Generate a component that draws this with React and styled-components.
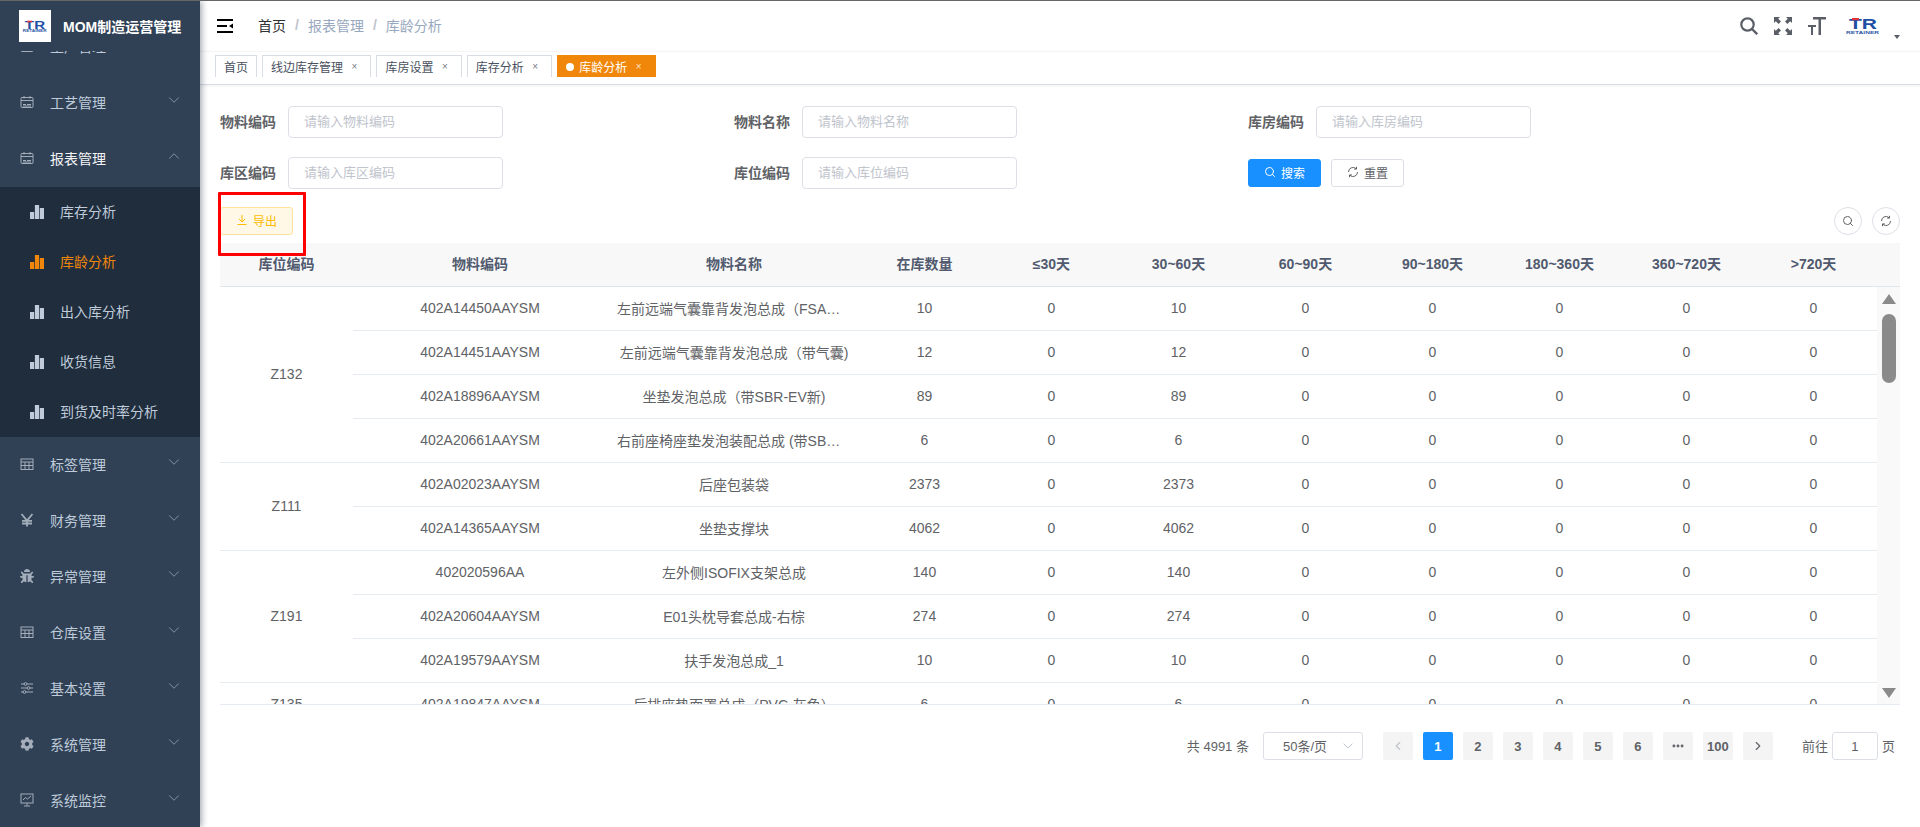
import React from 'react';
import styled, { createGlobalStyle } from 'styled-components';
import { FaBug, FaCog } from 'react-icons/fa';
import { ChevronDown, ChevronUp, ChevronLeft, ChevronRight, Search, MoreHorizontal } from 'lucide-react';

const Global = createGlobalStyle`
  html, body { margin: 0; padding: 0; height: 100%; overflow: hidden; background: #fff; }
  #root { height: 100%; }
  * { box-sizing: border-box; }
  body { font-family: "Liberation Sans", "Noto Sans CJK SC", sans-serif; font-size: 14px; color: #606266; }
`;

const Shell = styled.div`
  display: flex;
  height: 827px;
  border-top: 1px solid #666;
  overflow: hidden;
`;

const Side = styled.aside`
  position: relative;
  z-index: 3;
  flex: 0 0 200px;
  display: flex;
  flex-direction: column;
  background: #304156;
  box-shadow: 2px 0 6px rgba(0, 21, 41, 0.35);
`;
const Brand = styled.div`
  position: relative;
  z-index: 1;
  flex: 0 0 50px;
  display: flex;
  align-items: center;
  gap: 12px;
  padding: 0 0 0 19px;
  background: #304156;
  color: #fff;
  font-weight: 700;
  font-size: 14px;
`;
const BrandMark = styled.div`
  width: 32px;
  height: 32px;
  background: #fff;
  display: flex;
  align-items: center;
  justify-content: center;
`;
const MenuClip = styled.nav`
  flex: 1;
  overflow: hidden;
`;
const MenuList = styled.div`
  margin-top: -32px;
`;
const MenuItem = styled.div`
  height: 56px;
  display: flex;
  align-items: center;
  padding: 0 20px;
  color: ${p => (p.$open ? '#f4f4f5' : '#bfcbd9')};
`;
const MenuIcon = styled.span`
  flex: 0 0 30px;
  display: flex;
  align-items: center;
  margin-top: -2px;
  color: #a3aeba;
`;
const MenuLabel = styled.span`
  flex: 1;
  padding-bottom: 2px;
`;
const MenuArrow = styled.span`
  display: flex;
  margin-right: -3px;
  margin-top: -6px;
  color: #8493a5;
`;
const SubList = styled.div`
  background: #1f2d3d;
`;
const SubItem = styled.div`
  height: 50px;
  display: flex;
  align-items: center;
  padding-left: 30px;
  gap: 16px;
  color: ${p => (p.$active ? '#f1870a' : '#bfcbd9')};
`;
const SubText = styled.span`
  padding-bottom: 2px;
`;

const Main = styled.main`
  flex: 1;
  min-width: 0;
  display: flex;
  flex-direction: column;
`;
const Navbar = styled.header`
  flex: 0 0 50px;
  display: flex;
  align-items: center;
  padding: 0 20px 0 17px;
`;
const Crumbs = styled.div`
  display: flex;
  align-items: center;
  margin-left: 25px;
  padding-bottom: 2px;
  flex: 1;
  color: #97a8be;
`;
const CrumbSep = styled.span`
  margin: 0 9px;
  color: #c0c4cc;
  font-weight: 700;
`;
const CrumbHome = styled.span`
  color: #303133;
`;
const Tools = styled.div`
  display: flex;
  align-items: center;
  gap: 16px;
  color: #5a5e66;
`;
const Avatar = styled.div`
  display: flex;
  align-items: flex-end;
  gap: 13px;
  margin-left: 3px;
`;
const Caret = styled.span`
  width: 0;
  height: 0;
  border-left: 3.5px solid transparent;
  border-right: 3.5px solid transparent;
  border-top: 4px solid #5a5e66;
  margin-bottom: -4px;
`;
const TagsBar = styled.div`
  flex: 0 0 34px;
  display: flex;
  gap: 5px;
  align-items: flex-start;
  padding: 3px 0 0 15px;
  border-top: 1px solid #f5f5f5;
  border-bottom: 1px solid #d8dce5;
  box-shadow: 0 1px 3px rgba(0, 0, 0, 0.06);
`;
const Tag = styled.div`
  height: 22px;
  display: flex;
  align-items: center;
  padding: 0 8px;
  font-size: 12px;
  color: ${p => (p.$active ? '#fff' : '#495060')};
  background: ${p => (p.$active ? '#f1870a' : '#fff')};
  border: 1px solid ${p => (p.$active ? '#f1870a' : '#d8dce5')};
  border-bottom: none;
`;
const TagDot = styled.span`
  width: 8px;
  height: 8px;
  border-radius: 50%;
  background: #fff;
  margin-right: 5px;
`;
const TagClose = styled.span`
  width: 16px;
  margin-left: 3.4px;
  text-align: center;
  font-size: 10px;
  opacity: 0.75;
`;

const Content = styled.section`
  flex: 1;
  padding: 21px 20px 0;
  position: relative;
  min-height: 0;
`;
const Filters = styled.form`
  display: grid;
  grid-template-columns: repeat(3, 514px);
  row-gap: 19px;
`;
const Field = styled.label`
  display: flex;
  align-items: center;
  height: 32px;
`;
const FieldLabel = styled.span`
  flex: 0 0 68px;
  font-weight: 700;
  padding-bottom: 2px;
`;
const Input = styled.input`
  width: 215px;
  height: 32px;
  padding: 0 15px 2px;
  border: 1px solid #dcdfe6;
  border-radius: 4px;
  font: inherit;
  font-size: 13px;
  outline: none;
  &::placeholder { color: #c0c4cc; opacity: 1; }
`;
const Actions = styled.div`
  display: flex;
  align-items: center;
  gap: 10px;
`;
const Button = styled.button`
  width: 73px;
  height: 28px;
  display: inline-flex;
  align-items: center;
  justify-content: center;
  gap: 5px;
  padding: 0 0 2px;
  font: inherit;
  font-size: 12px;
  border-radius: 3px;
  border: 1px solid ${p => (p.$kind === 'primary' ? '#1890ff' : p.$kind === 'warn' ? '#ffe399' : '#dcdfe6')};
  background: ${p => (p.$kind === 'primary' ? '#1890ff' : p.$kind === 'warn' ? '#fff8e6' : '#fff')};
  color: ${p => (p.$kind === 'primary' ? '#fff' : p.$kind === 'warn' ? '#ffba00' : '#606266')};
`;
const Toolbar = styled.div`
  position: relative;
  display: flex;
  justify-content: space-between;
  align-items: center;
  margin-top: 18px;
  height: 28px;
`;
const RoundGroup = styled.div`
  display: flex;
  gap: 10px;
`;
const RoundButton = styled.button`
  width: 28px;
  height: 28px;
  border-radius: 50%;
  border: 1px solid #dcdfe6;
  background: #fff;
  padding: 0;
  display: flex;
  align-items: center;
  justify-content: center;
  color: #606266;
`;
const RedMark = styled.div`
  position: absolute;
  left: -2px;
  top: -15px;
  width: 88px;
  height: 64px;
  border: 3px solid #f00;
  border-radius: 1px;
  pointer-events: none;
`;

const TableWrap = styled.div`
  margin-top: 8px;
  border-bottom: 1px solid #e6ebf5;
  height: 462px;
  display: grid;
  grid-template-columns: 1657px 23px;
  grid-template-rows: 44px 417px;
`;
const Table = styled.table`
  width: 1657px;
  table-layout: fixed;
  border-collapse: separate;
  border-spacing: 0;
`;
const HeadTable = styled(Table)`
  width: 1680px;
`;
const HeadBox = styled.div`
  grid-column: 1 / 3;
  background: #f8f8f9;
  border-bottom: 1px solid #dfe6ec;
`;
const Th = styled.th`
  height: 43px;
  font-weight: 700;
  font-size: 14px;
  color: #515a6e;
  text-align: center;
  padding: 0 10px 3px;
`;
const BodyBox = styled.div`
  overflow: hidden;
`;
const Td = styled.td`
  height: 44px;
  padding: 0 10px 2px;
  text-align: center;
  color: #606266;
  border-bottom: 1px solid #e6ebf2;
  white-space: nowrap;
  overflow: hidden;
  text-overflow: ellipsis;
`;
const ScrollTrack = styled.div`
  background: #f9f9f9;
  display: flex;
  flex-direction: column;
  align-items: center;
  padding-top: 7px;
  position: relative;
`;
const ScrollThumb = styled.div`
  width: 14px;
  height: 69px;
  margin-top: 10px;
  border-radius: 7px;
  background: #8a8a8a;
`;
const ScrollArrow = styled.div`
  width: 0;
  height: 0;
  border-left: 7.5px solid transparent;
  border-right: 7.5px solid transparent;
  ${p => (p.$down
    ? 'border-top: 10px solid #8a8a8a; position: absolute; bottom: 6px;'
    : 'border-bottom: 10px solid #8a8a8a;')}
`;

const Pager = styled.div`
  display: flex;
  align-items: center;
  justify-content: flex-end;
  margin-top: 27px;
  padding-right: 5px;
  height: 28px;
  font-size: 13px;
`;
const Total = styled.span`
  margin-right: 14px;
  padding-bottom: 2px;
`;
const PageSelect = styled.div`
  width: 100px;
  height: 28px;
  display: flex;
  align-items: center;
  justify-content: space-between;
  padding: 0 6px 0 19px;
  margin-right: 20px;
  border: 1px solid #dcdfe6;
  border-radius: 3px;
  color: #c0c4cc;
`;
const PageSelectText = styled.span`
  color: #606266;
  padding-bottom: 2px;
`;
const PageButtons = styled.div`
  display: flex;
  gap: 10px;
`;
const PageBtn = styled.div`
  width: 30px;
  height: 28px;
  display: flex;
  align-items: center;
  justify-content: center;
  border-radius: 2px;
  font-weight: 700;
  font-size: 13px;
  background: ${p => (p.$on ? '#1890ff' : '#f4f4f5')};
  color: ${p => (p.$on ? '#fff' : p.$off ? '#c0c4cc' : '#606266')};
`;
const Jump = styled.div`
  display: flex;
  align-items: center;
  margin-left: 29px;
  gap: 4px;
  padding-bottom: 0;
`;
const JumpText = styled.span`
  padding-bottom: 2px;
`;
const JumpInput = styled.div`
  width: 46px;
  height: 28px;
  display: flex;
  align-items: center;
  justify-content: center;
  border: 1px solid #dcdfe6;
  border-radius: 3px;
`;

const Svg = ({ s = 14, vb = '0 0 14 14', children, ...r }) => (
  <svg width={s} height={s} viewBox={vb} fill="none" stroke="currentColor" strokeWidth="1" {...r}>{children}</svg>
);
const CalIcon = () => (
  <Svg>
    <rect x="1" y="2.5" width="12" height="10" rx="1" />
    <path d="M1 5.5h12M4 1v2.5M10 1v2.5M3 9.5h3M7 9.5h4M3 11h8" />
  </Svg>
);
const TableIcon = () => (
  <Svg>
    <rect x="1" y="2" width="12" height="10.5" />
    <path d="M1 5h12M1 8.5h12M5 5v7.5M9 5v7.5" />
  </Svg>
);
const YenIcon = () => (
  <Svg strokeWidth="1.8"><path d="M1.5 1l5.5 6.5L12.500 1M7 7v6.500M2 7.800h10M2 10.500h10" /></Svg>
);
const SliderIcon = () => (
  <Svg>
    <path d="M1 3h3M7 3h6M1 7h6M10 7h3M1 11h2M6 11h7" />
    <circle cx="5.500" cy="3" r="1.400" /><circle cx="8.500" cy="7" r="1.400" /><circle cx="4.500" cy="11" r="1.400" />
  </Svg>
);
const MonitorIcon = () => (
  <Svg>
    <rect x="1" y="1" width="12" height="9" />
    <path d="M3 7l2.500-2.500 2 1.500L11 3M7 10v2.500M4 13h6" />
  </Svg>
);
const BarsIcon = () => (
  <svg width="14" height="14" viewBox="0 0 14 14" fill="currentColor">
    <rect x="0" y="7" width="4.200" height="7" /><rect x="4.900" y="0" width="4.200" height="14" /><rect x="9.800" y="3" width="4.200" height="11" />
  </svg>
);
const Hamburger = () => (
  <svg width="16" height="14" viewBox="0 0 16 14" fill="#000">
    <rect x="0" y="0" width="16" height="2" /><rect x="0" y="6" width="10" height="2" /><rect x="0" y="12" width="16" height="2" />
    <path d="M16 4.500v5l-4-2.500z" />
  </svg>
);
const TopSearch = () => (
  <svg width="18" height="18" viewBox="0 0 18 18" fill="none" stroke="currentColor">
    <circle cx="7.500" cy="7.500" r="6.200" strokeWidth="2.200" />
    <path d="M12 12l5.200 5.200" strokeWidth="2.400" />
  </svg>
);
const FullIcon = () => (
  <svg width="18" height="18" viewBox="0 0 18 18" fill="currentColor">
    <path d="M0 0h6L4.200 1.800 7 4.600 4.600 7 1.800 4.200 0 6zM18 0v6l-1.800-1.800L13.400 7 11 4.600l2.800-2.800L12 0zM0 18v-6l1.800 1.800L4.600 11 7 13.400l-2.800 2.800L6 18zM18 18h-6l1.800-1.800L11 13.400l2.400-2.400 2.800 2.800L18 12z" />
  </svg>
);
const SizeIcon = () => (
  <svg width="18" height="18" viewBox="0 0 18 18" fill="currentColor">
    <path d="M5 0h13v2.500h-5V18h-2.500V2.500H5zM0 8h8v2H5v8H3v-8H0z" />
  </svg>
);
const Refresh = ({ s = 12 }) => (
  <Svg s={s} vb="0 0 12 12">
    <path d="M10.500 6A4.500 4.500 0 0 1 3 9.400M1.500 6A4.500 4.500 0 0 1 9 2.600" />
    <path d="M9.500 0.800v2.300H7.200M2.500 11.200V8.900h2.300" />
  </Svg>
);
const Download = () => (
  <Svg s={12} vb="0 0 12 12"><path d="M6 1v6.500M3 5l3 3 3-3M1.500 10.500h9" /></Svg>
);
const Logo = ({ w = 26, h = 14 }) => (
  <svg width={w} height={h} viewBox="0 0 36 18">
    <text x="4" y="12" textLength="28" lengthAdjust="spacingAndGlyphs" fontFamily="Liberation Sans" fontWeight="700" fontSize="15.300" fill="#1f4fa3">TR</text>
    <rect x="7" y="1" width="7" height="2.200" fill="#e2343f" />
    <text x="1" y="17" textLength="33" lengthAdjust="spacingAndGlyphs" fontFamily="Liberation Sans" fontSize="4" fontWeight="700" fill="#2f5aa8">RETAINER</text>
  </svg>
);

const menusTop = [
  { name: '生产管理', icon: <CalIcon /> },
  { name: '工艺管理', icon: <CalIcon /> },
];
const menusBottom = [
  { name: '标签管理', icon: <TableIcon /> },
  { name: '财务管理', icon: <YenIcon /> },
  { name: '异常管理', icon: <FaBug size={14} /> },
  { name: '仓库设置', icon: <TableIcon /> },
  { name: '基本设置', icon: <SliderIcon /> },
  { name: '系统管理', icon: <FaCog size={14} /> },
  { name: '系统监控', icon: <MonitorIcon /> },
];
const subs = ['库存分析', '库龄分析', '出入库分析', '收货信息', '到货及时率分析'];
const tabs = ['线边库存管理', '库房设置', '库存分析'];
const fields = [
  ['物料编码', '请输入物料编码'],
  ['物料名称', '请输入物料名称'],
  ['库房编码', '请输入库房编码'],
  ['库区编码', '请输入库区编码'],
  ['库位编码', '请输入库位编码'],
];
const heads = ['库位编码', '物料编码', '物料名称', '在库数量', '≤30天', '30~60天', '60~90天', '90~180天', '180~360天', '360~720天', '>720天'];
const rows = [
  { z: 'Z132', span: 4, code: '402A14450AAYSM', name: '左前远端气囊靠背发泡总成（FSA带气囊）', q: 10 },
  { code: '402A14451AAYSM', name: '左前远端气囊靠背发泡总成（带气囊)', q: 12 },
  { code: '402A18896AAYSM', name: '坐垫发泡总成（带SBR-EV新)', q: 89 },
  { code: '402A20661AAYSM', name: '右前座椅座垫发泡装配总成 (带SB气囊新)', q: 6 },
  { z: 'Z111', span: 2, code: '402A02023AAYSM', name: '后座包装袋', q: 2373 },
  { code: '402A14365AAYSM', name: '坐垫支撑块', q: 4062 },
  { z: 'Z191', span: 3, code: '402020596AA', name: '左外侧ISOFIX支架总成', q: 140 },
  { code: '402A20604AAYSM', name: 'E01头枕导套总成-右棕', q: 274 },
  { code: '402A19579AAYSM', name: '扶手发泡总成_1', q: 10 },
  { z: 'Z135', span: 1, code: '402A19847AAYSM', name: '后排座垫面罩总成（PVC-灰色）', q: 6 },
];

const Cols = ({ gutter }) => (
  <colgroup>
    <col width="133" />
    <col width="254" />
    <col width="254" />
    {Array.from({ length: 8 }).map((_, i) => <col key={i} width="127" />)}
    {gutter && <col width="23" />}
  </colgroup>
);

const MenuRow = ({ m }) => (
  <MenuItem>
    <MenuIcon>{m.icon}</MenuIcon>
    <MenuLabel>{m.name}</MenuLabel>
    <MenuArrow><ChevronDown size={18} strokeWidth={1.3} /></MenuArrow>
  </MenuItem>
);

export default function App() {
  return (
    <Shell>
      <Global />
      <Side>
        <Brand>
          <BrandMark><Logo h={13} /></BrandMark>
          MOM制造运营管理
        </Brand>
        <MenuClip>
          <MenuList>
            {menusTop.map(m => <MenuRow key={m.name} m={m} />)}
            <MenuItem $open>
              <MenuIcon><CalIcon /></MenuIcon>
              <MenuLabel>报表管理</MenuLabel>
              <MenuArrow><ChevronUp size={18} strokeWidth={1.3} /></MenuArrow>
            </MenuItem>
            <SubList>
              {subs.map((s, i) => (
                <SubItem key={s} $active={i === 1}>
                  <BarsIcon />
                  <SubText>{s}</SubText>
                </SubItem>
              ))}
            </SubList>
            {menusBottom.map(m => <MenuRow key={m.name} m={m} />)}
          </MenuList>
        </MenuClip>
      </Side>
      <Main>
        <Navbar>
          <Hamburger />
          <Crumbs>
            <CrumbHome>首页</CrumbHome>
            <CrumbSep>/</CrumbSep>
            <span>报表管理</span>
            <CrumbSep>/</CrumbSep>
            <span>库龄分析</span>
          </Crumbs>
          <Tools>
            <TopSearch />
            <FullIcon />
            <SizeIcon />
            <Avatar>
              <Logo w={36} h={18} />
              <Caret />
            </Avatar>
          </Tools>
        </Navbar>
        <TagsBar>
          <Tag>首页</Tag>
          {tabs.map(t => (
            <Tag key={t}>{t}<TagClose>×</TagClose></Tag>
          ))}
          <Tag $active><TagDot />库龄分析<TagClose>×</TagClose></Tag>
        </TagsBar>
        <Content>
          <Filters>
            {fields.map(([l, p]) => (
              <Field key={l}>
                <FieldLabel>{l}</FieldLabel>
                <Input placeholder={p} />
              </Field>
            ))}
            <Actions>
              <Button type="button" $kind="primary"><Search size={12} />搜索</Button>
              <Button type="button"><Refresh />重置</Button>
            </Actions>
          </Filters>
          <Toolbar>
            <Button type="button" $kind="warn"><Download />导出</Button>
            <RedMark />
            <RoundGroup>
              <RoundButton type="button"><Search size={12} /></RoundButton>
              <RoundButton type="button"><Refresh /></RoundButton>
            </RoundGroup>
          </Toolbar>
          <TableWrap>
            <HeadBox>
              <HeadTable>
                <Cols gutter />
                <thead>
                  <tr>
                    {heads.map(h => <Th key={h}>{h}</Th>)}
                    <Th />
                  </tr>
                </thead>
              </HeadTable>
            </HeadBox>
            <BodyBox>
              <Table>
                <Cols />
                <tbody>
                  {rows.map(r => (
                    <tr key={r.code}>
                      {r.z && <Td rowSpan={r.span}>{r.z}</Td>}
                      <Td>{r.code}</Td>
                      <Td>{r.name}</Td>
                      <Td>{r.q}</Td>
                      <Td>0</Td>
                      <Td>{r.q}</Td>
                      <Td>0</Td>
                      <Td>0</Td>
                      <Td>0</Td>
                      <Td>0</Td>
                      <Td>0</Td>
                    </tr>
                  ))}
                </tbody>
              </Table>
            </BodyBox>
            <ScrollTrack>
              <ScrollArrow />
              <ScrollThumb />
              <ScrollArrow $down />
            </ScrollTrack>
          </TableWrap>
          <Pager>
            <Total>共 4991 条</Total>
            <PageSelect>
              <PageSelectText>50条/页</PageSelectText>
              <ChevronDown size={16} strokeWidth={1.5} />
            </PageSelect>
            <PageButtons>
              <PageBtn $off><ChevronLeft size={14} /></PageBtn>
              <PageBtn $on>1</PageBtn>
              {['2', '3', '4', '5', '6'].map(n => <PageBtn key={n}>{n}</PageBtn>)}
              <PageBtn><MoreHorizontal size={14} strokeWidth={3} /></PageBtn>
              <PageBtn>100</PageBtn>
              <PageBtn><ChevronRight size={14} /></PageBtn>
            </PageButtons>
            <Jump>
              <JumpText>前往</JumpText>
              <JumpInput>1</JumpInput>
              <JumpText>页</JumpText>
            </Jump>
          </Pager>
        </Content>
      </Main>
    </Shell>
  );
}
